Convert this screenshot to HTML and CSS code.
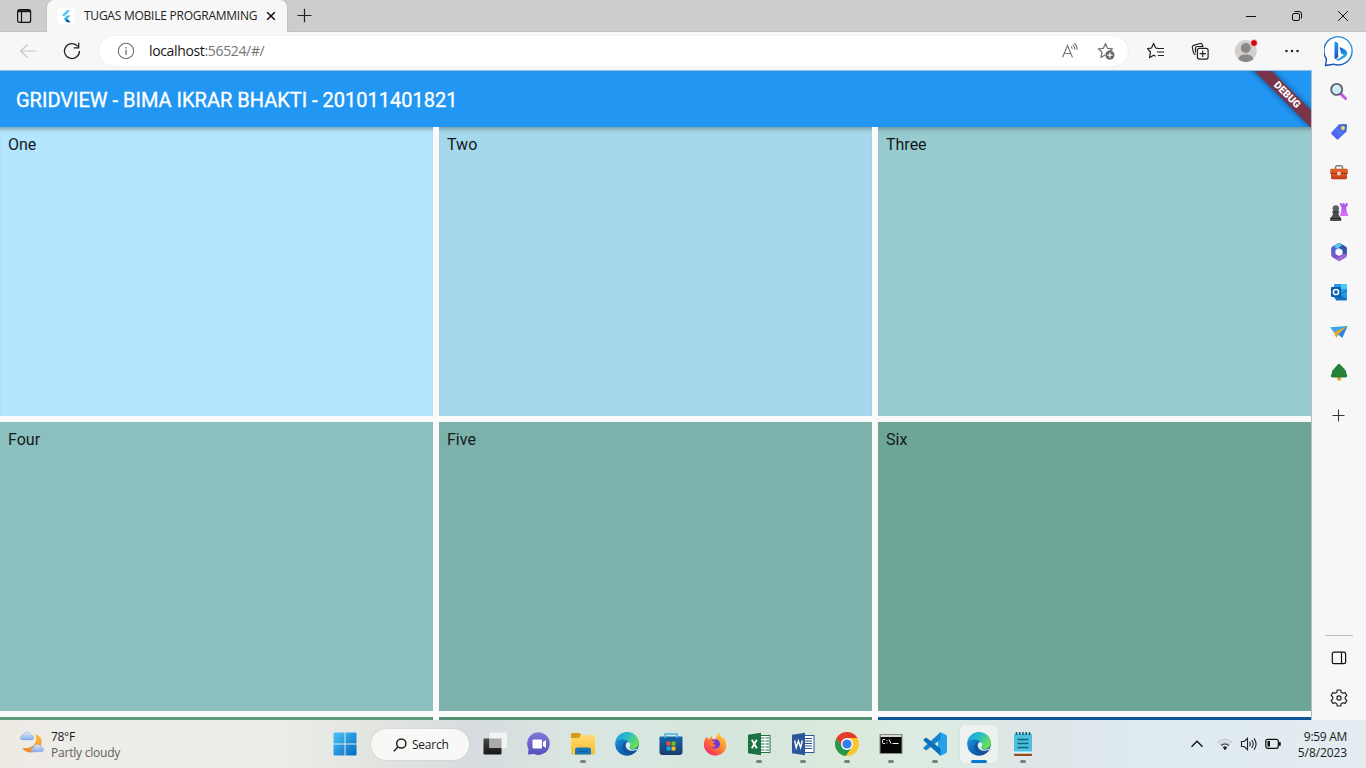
FILE: index.html
```html
<!DOCTYPE html>
<html lang="en">
<head>
<meta charset="utf-8">
<title>TUGAS MOBILE PROGRAMMING</title>
<link rel="stylesheet" href="styles.css">
</head>
<body>
<svg class="defs" width="0" height="0" aria-hidden="true">
  <defs>
    <linearGradient id="edgeTop" x1="0" y1="0" x2="1" y2=".5"><stop offset="0" stop-color="#1e9de6"/><stop offset=".5" stop-color="#24bcc9"/><stop offset="1" stop-color="#69e055"/></linearGradient>
    <linearGradient id="edgeLow" x1="0" y1="0" x2="1" y2="1"><stop offset="0" stop-color="#2aa5e4"/><stop offset=".5" stop-color="#0d68b8"/><stop offset="1" stop-color="#124a91"/></linearGradient>
    <linearGradient id="bing" x1="0" y1="0" x2="1" y2="1"><stop offset="0" stop-color="#1b4bbd"/><stop offset=".5" stop-color="#1b86e2"/><stop offset="1" stop-color="#2bd0e0"/></linearGradient>
    <linearGradient id="bingStem" x1="0" y1="0" x2="0" y2="1"><stop offset="0" stop-color="#27a0ea"/><stop offset="1" stop-color="#1a4fc4"/></linearGradient>
    <linearGradient id="bingRing" x1="0" y1="1" x2="1" y2="0"><stop offset="0" stop-color="#1944ae"/><stop offset="1" stop-color="#2aa4e8"/></linearGradient>
    <linearGradient id="tag" x1="1" y1="0" x2="0" y2="1"><stop offset="0" stop-color="#4267ca"/><stop offset=".5" stop-color="#4d73f1"/><stop offset="1" stop-color="#4a50f0"/></linearGradient>
    <linearGradient id="win" x1="0" y1="0" x2="1" y2="1"><stop offset="0" stop-color="#4cc5f7"/><stop offset="1" stop-color="#0069c5"/></linearGradient>
    <linearGradient id="folder" x1="0" y1="0" x2="0" y2="1"><stop offset="0" stop-color="#ffdc73"/><stop offset="1" stop-color="#f8bd2d"/></linearGradient>
    <linearGradient id="fox" x1="1" y1="0" x2=".2" y2="1"><stop offset="0" stop-color="#ffe14a"/><stop offset=".5" stop-color="#ff8a2b"/><stop offset="1" stop-color="#f52166"/></linearGradient>
    <linearGradient id="chat" x1="0" y1="0" x2="0" y2="1"><stop offset="0" stop-color="#8078d8"/><stop offset="1" stop-color="#5451bd"/></linearGradient>
    <linearGradient id="store" x1="0" y1="0" x2="0" y2="1"><stop offset="0" stop-color="#1466a9"/><stop offset="1" stop-color="#163d6b"/></linearGradient>
    <linearGradient id="moon" x1="0" y1="0" x2="0" y2="1"><stop offset="0" stop-color="#f9c33b"/><stop offset="1" stop-color="#ee8528"/></linearGradient>
    <linearGradient id="cloud" x1="0" y1="0" x2="0" y2="1"><stop offset="0" stop-color="#dfeafb"/><stop offset="1" stop-color="#86acea"/></linearGradient>
    <linearGradient id="dark" x1="0" y1="0" x2="0" y2="1"><stop offset="0" stop-color="#474747"/><stop offset="1" stop-color="#151515"/></linearGradient>
    <linearGradient id="rook" x1="0" y1="0" x2="0" y2="1"><stop offset="0" stop-color="#a24bed"/><stop offset="1" stop-color="#dd74f5"/></linearGradient>
    <linearGradient id="case" x1="0" y1="0" x2="0" y2="1"><stop offset="0" stop-color="#e1602a"/><stop offset="1" stop-color="#bd3a14"/></linearGradient>
    <symbol id="edge" viewBox="0 0 24 24">
      <circle cx="12" cy="12" r="11.800" fill="url(#edgeLow)"/>
      <path d="M.4 10C1.500 4 6 .2 12 .2c6.700 0 11.800 4.800 11.800 10.500 0 3.800-2.800 6.300-6.300 6.300-3 0-4.500-1.200-4-2.400 1.700-2.400.6-5.900-3.300-6.700C6 7 2.300 7.700.4 10z" fill="url(#edgeTop)"/>
      <path d="M11 9.800c-2.900 1.400-4 5.200-2.400 8.400 1.300 2.700 4.400 4.600 7.600 4.300 2.900-1 5-2.800 6.200-4.900-5 2.500-11.600.2-11.800-4.600 0-1.300.3-2.400.4-3.200z" fill="#11529c"/>
      <path d="M11.800 10.500c1.800-.9 3.800.2 3.600 2.200-.1 1.200-1.500 2-1.200 3.100.5 1.700 3.500 2.200 6 1.400l2.500-1c-.3.700-.6 1.200-1 1.700-4.700 2-10.800.3-11-4.500 0-1.200.3-2.300 1.100-2.900z" fill="#deefea"/>
    </symbol>
    <symbol id="cloudShape" viewBox="0 0 14 9"><path d="M3 8.500C.8 8.500.2 6.900.4 5.800.7 4.600 1.900 4 3 4.200 3.300 2 5 .6 7 .6s3.600 1.400 3.800 3.200c1.600-.1 2.800 1 2.800 2.400s-1 2.300-2.400 2.300z" fill="url(#cloud)" stroke="#7fa3dc" stroke-width=".5"/></symbol>
  </defs>
</svg>

<div class="desktop">
  <header class="titlebar">
    <div class="workspaces"><svg width="16" height="16" viewBox="0 0 16 16" fill="none" stroke="#111" stroke-width="1.200"><rect x="1.600" y="1.700" width="13" height="12.700" rx="2"/><path d="M2 3.200h12.300" stroke-width="2"/><path d="M5.500 4v10"/></svg></div>
    <div class="tab">
      <span class="favicon"><svg width="16" height="16" viewBox="0 0 16 16"><path d="M8.900 2.200h3.600L6 8.700 4.200 6.900z" fill="#54c5f8"/><path d="M9 7.600h3.600L9.200 11l3.400 3.300H9L5.700 11z" fill="#40b6ee"/><path d="m7.400 12.700 1.800-1.700 3.400 3.300H9z" fill="#08589c"/></svg></span>
      <span class="tab-title">TUGAS MOBILE PROGRAMMING</span>
      <svg class="tab-close" width="10" height="10" viewBox="0 0 10 10" stroke="#111" stroke-width="1.500"><path d="m1.200 1.200 7.600 7.600M8.800 1.200 1.200 8.800"/></svg>
    </div>
    <svg class="new-tab" width="15" height="15" viewBox="0 0 15 15" stroke="#222" stroke-width="1.200"><path d="M7.500 .8v13.400M.5 7.500h14"/></svg>
    <div class="window-buttons">
      <svg width="12" height="12" viewBox="0 0 12 12" stroke="#111" fill="none"><path d="M1 6.500h10"/></svg>
      <svg width="12" height="12" viewBox="0 0 12 12" stroke="#111" fill="none"><rect x="1.500" y="3.500" width="7" height="7" rx="1.500"/><path d="M3.500 1.500h4.500q2.500 0 2.500 2.500v4.500"/></svg>
      <svg width="12" height="12" viewBox="0 0 12 12" stroke="#111" fill="none"><path d="m1 1 10 10M11 1 1 11"/></svg>
    </div>
  </header>

  <div class="window">
    <section class="browser">
      <div class="toolbar">
        <svg class="back" width="18" height="16" viewBox="0 0 18 16" fill="none" stroke="#c5c5c5" stroke-width="1.100"><path d="M17 8H1.500M8.500 1.500 1.500 8l7 6.500"/></svg>
        <svg class="reload" width="18" height="18" viewBox="0 0 18 18" fill="none" stroke="#222" stroke-width="1.300"><path d="M16.500 9A7.500 7.500 0 1 1 14.800 4.300M15.700.8v5h-5"/></svg>
        <div class="address">
          <svg width="18" height="18" viewBox="0 0 18 18" fill="none" stroke="#707070" stroke-width="1.100"><circle cx="9" cy="9" r="7.700"/><path d="M9 7.700v5.200M9 4.900v1.500" stroke-width="1.300"/></svg>
          <span class="url"><b>localhost</b>:56524/#/</span>
          <svg class="read" width="18" height="18" viewBox="0 0 18 18" fill="none" stroke="#767676" stroke-width="1.100"><path d="m1.500 15.500 5-12 5 12M3.300 11.500h6.400M10 4.300q1.200 1.100 1.200 2.800M11.800 2.600q2.200 2 2 5M13.300 1.200q3.200 2.500 2.700 6.500"/></svg>
          <svg class="fav" width="18" height="18" viewBox="0 0 18 18"><path d="m8.500 1.500 2 4.800 5 .5-3.800 3.400M8.500 1.500l-2.100 4.800-5.100.5 3.800 3.500-1.200 5.200 4.300-2.500" fill="none" stroke="#737373" stroke-width="1.200" stroke-linejoin="round"/><circle cx="12.900" cy="13.100" r="4.600" fill="#686868"/><path d="M12.900 10.500v5.200M10.300 13.100h5.200" stroke="#fff" stroke-width="1.200"/></svg>
        </div>
        <div class="tools">
          <svg width="18" height="18" viewBox="0 0 18 18" fill="none" stroke="#222" stroke-width="1.200" stroke-linejoin="round"><path d="m11 6.300-2.300-.3L6.600 1.400 4.500 6l-4 .6L3.500 10l-1 5.700 4.100-2.500 2 1.100M11 6.500h6M10 10h7M11 13.500h6"/></svg>
          <svg width="18" height="18" viewBox="0 0 18 18" fill="none" stroke="#222" stroke-width="1.200"><rect x="6.400" y="6.400" width="10.700" height="10.700" rx="2"/><path d="M11.700 8.600v6.300M8.600 11.700h6.300M4.800 12.500Q3 12.500 2.500 10.700L1.300 5.700Q1 4 2.600 3.400L9 1.500q1.700-.3 2.300 1.400l.5 1.400M4.500 10.500V6.300q0-1.800 1.800-1.800h6.200"/></svg>
          <svg class="avatar" width="24" height="24" viewBox="0 0 24 24"><circle cx="11.800" cy="12" r="11" fill="#d2d0ce"/><circle cx="11.800" cy="9" r="5" fill="#8b8885"/><path d="M4.300 20.300C5 16.700 8 15.500 11.800 15.500s6.800 1.200 7.500 4.800a11 11 0 0 1-15 0z" fill="#8b8885"/><circle cx="20" cy="4" r="3.400" fill="#d4000d" stroke="#f7f7f7" stroke-width=".7"/></svg>
          <svg width="16" height="16" viewBox="0 0 16 16" fill="#222"><circle cx="2.500" cy="8" r="1.250"/><circle cx="8" cy="8" r="1.250"/><circle cx="13.500" cy="8" r="1.250"/></svg>
        </div>
      </div>
      <main class="app">
        <div class="appbar"><h1>GRIDVIEW - BIMA IKRAR BHAKTI - 201011401821</h1><span class="ribbon">DEBUG</span></div>
        <div class="grid">
          <div class="cell one">One</div><div class="cell two">Two</div><div class="cell three">Three</div>
          <div class="cell four">Four</div><div class="cell five">Five</div><div class="cell six">Six</div>
          <div class="cell seven"></div><div class="cell eight"></div><div class="cell nine"></div>
        </div>
      </main>
    </section>
    <aside class="sidebar">
      <svg class="bing" width="32" height="32" viewBox="0 0 32 32"><path d="M1.500 30.500 2.500 24A14.100 14.100 0 1 1 9.500 29.200z" fill="#fff" stroke="url(#bingRing)" stroke-width="1.400" stroke-linejoin="round"/><path d="M10.500 6.500q2 .2 3.700 1.800v14l-2.700 2q-1-.5-1-2z" fill="url(#bingStem)"/><path d="M15.500 12.800q.4-1 1.500-.4l3.500 1.800q3 1.700 2.700 4.500-.3 2.200-2.200 3.500l-5.500 3q-2 1-3.500-.5 5-1.700 5.900-3.700l2.100-1-2.800-1.500z" fill="url(#bing)"/></svg>
      <svg width="20" height="20" viewBox="0 0 20 20"><path d="m11 11 5.500 5.500" stroke="#c756e5" stroke-width="3" stroke-linecap="round"/><circle cx="7.700" cy="7.400" r="5.500" fill="#cdeaf8" stroke="#5c6265" stroke-width="1.800"/><path d="M4.500 7q.6-2.500 3-3" stroke="#fff" fill="none"/></svg>
      <svg width="20" height="20" viewBox="0 0 20 20"><path d="M10 2.300 17 2q1 0 1 1l-.4 6.500L9.500 17q-1 1-2 0L2.600 12.300q-1-1 0-2z" fill="url(#tag)"/><circle cx="14" cy="6" r="1.900" fill="#ffd45c"/></svg>
      <svg width="20" height="20" viewBox="0 0 20 20"><path d="M6.500 7V5.500q0-1.800 1.800-1.800h3.400q1.800 0 1.800 1.800V7" fill="none" stroke="#7a7c7d" stroke-width="1.400"/><rect x="1.200" y="6.800" width="17.600" height="5" rx="1" fill="#df5b26"/><path d="M2 11h16v5q0 1.300-1.300 1.300H3.300Q2 17.300 2 16z" fill="url(#case)"/><path d="M1.500 11.500h17" stroke="#9c3011"/><circle cx="10" cy="11.500" r="1.900" fill="#dad5d1"/></svg>
      <svg width="20" height="20" viewBox="0 0 20 20"><path d="M10.800 1h1.700v1.500h1.300V1h1.700v1.500h1.300V1h1.700v3l-1.300 1 .7 6 1.200 1.300V14h-8v-1.700l1-1.300.4-6-1-1z" fill="url(#rook)"/><path d="m4.500 8.500-1 5-2.300 2.700V19h11v-2.800L10 13.500l-1-5z" fill="#4b4c4e"/><circle cx="6.800" cy="6.500" r="3.200" fill="#5d5f61"/><path d="M3 10h7.500M1.500 16.500h10.300" stroke="#292a2c"/></svg>
      <svg width="20" height="20" viewBox="0 0 20 20"><path d="M9 1.500q1.200-.6 2.300 0l5.200 3q1.300.8 1.300 2.200v6.500q0 1.400-1.300 2.200l-5.200 3q-1.200.6-2.300 0l-5.500-3.200Q2.200 14.500 2.200 13V6.700q0-1.400 1.300-2.200z" fill="#7558c7"/><path d="m3.500 4.500 5.500-3q1.200-.5 2.300 0l3 1.800L7 7.300V12L2.500 9.500V6.200z" fill="#5368d3"/><path d="m8 2 3-.8 5.500 3.300q1.300.8 1.300 2.200v6.500L13.400 12V8L8 5z" fill="#2e5ca9"/><path d="m5 4 4-2.500q1-.5 2.300 0l2 1.200L8 7z" fill="#5cc8ec"/><path d="m17.800 11.500v2q-.3 1.200-1.300 1.900l-5.200 3q-1.200.6-2.300 0l-2-1.300 7.500-4.500z" fill="#a766d2"/><path d="m10 6.200 3.500 2v4L10 14.100l-3.500-2v-4z" fill="#f7f7f7"/></svg>
      <svg width="20" height="20" viewBox="0 0 20 20"><rect x="5" y="2" width="13" height="14.500" rx="1" fill="#239be7"/><path d="M12 2h5q1 0 1 1v4h-6z" fill="#45c7fa"/><path d="M5 12h6l7-4v9.500q0 1-1 1H7z" fill="#126fc3"/><path d="m11 13 7-4v8z" fill="#279be0"/><rect x="2" y="5" width="10" height="10" rx="1" fill="#075fac"/><circle cx="7" cy="10" r="2.600" fill="none" stroke="#fff" stroke-width="1.500"/></svg>
      <svg width="20" height="20" viewBox="0 0 20 20"><path d="M1 5.200 18.500 4 13.300 15.700l-4-3-2 3L5.500 11z" fill="#39a7ed"/><path d="M18.500 4 4.800 10.300l2.500 5.400L9.500 12z" fill="#eda528"/><path d="m18.500 4-9.200 8.400 4 3.300z" fill="#2f86dc"/></svg>
      <svg width="20" height="20" viewBox="0 0 20 20"><rect x="8.300" y="14" width="3.800" height="4.600" rx=".6" fill="#e6a230"/><path d="M9 2.200q1-1 2 0l3 3.300 3 3.500q.5.900 0 1.500l1.300 3q.3 2-2 2H3.800q-2.300 0-2-2l1.300-3q-.5-.6 0-1.500l3-3.500z" fill="#268038"/></svg>
      <svg class="add" width="16" height="16" viewBox="0 0 16 16" stroke="#333"><path d="M7.500 1.500v12M1.500 7.500h12"/></svg>
      <div class="sidebar-end">
        <svg width="16" height="14" viewBox="0 0 16 14" fill="none" stroke="#111" stroke-width="1.200"><rect x="1.300" y="1.200" width="13.300" height="11.500" rx="1.700"/><path d="M10.500 1.500v11"/></svg>
        <svg width="18" height="18" viewBox="0 0 18 18" fill="none" stroke="#222" stroke-width="1.200" stroke-linejoin="round"><path d="M7.300 1h3.400l.5 2.300 1.700 1 2.200-.7L16.800 6.500 15.200 8.100v1.800l1.600 1.600-1.700 2.900-2.200-.7-1.700 1-.5 2.300H7.300l-.5-2.300-1.700-1-2.200.7-1.700-2.900 1.600-1.600V8.100L1.200 6.500l1.700-2.900 2.200.7 1.700-1z"/><circle cx="9" cy="9" r="2.100"/></svg>
      </div>
    </aside>
  </div>

  <footer class="taskbar">
    <div class="weather">
      <svg width="28" height="26" viewBox="0 0 28 26"><path d="M15.500 5c4.500 1.300 6.700 5.200 6 9.300-.9 5.600-5.300 9.200-10.300 9.200-4 0-7.500-2-9-4.800 6.500 1.500 14-1.900 14-8.700 0-1.700-.2-3.300-.7-5z" fill="url(#moon)"/><use href="#cloudShape" x="0" y="2.500" width="14" height="9"/><use href="#cloudShape" x="10.500" y="14.500" width="13.500" height="9"/></svg>
      <div><p class="temp">78°F</p><p class="sky">Partly cloudy</p></div>
    </div>
    <nav class="apps">
      <div class="slot start"><svg width="24" height="24" viewBox="0 0 24 24" fill="url(#win)"><path d="M.5 1.500q0-1 1-1h10v11H.5zM12.500.5h10q1 0 1 1v10h-11zM.5 12.500h11v11h-10q-1 0-1-1zM12.500 12.500h11v10q0 1-1 1h-10z"/></svg></div>
      <div class="search"><svg width="14" height="14" viewBox="0 0 14 14" fill="none" stroke="#222" stroke-width="1.500"><circle cx="8.300" cy="5.500" r="4.600"/><path d="M4.900 9 .8 13.200"/></svg><span>Search</span></div>
      <div class="slot"><svg width="24" height="24" viewBox="0 0 24 24"><rect x=".5" y="6.500" width="18" height="16" rx="1" fill="url(#dark)"/><rect x="6.500" y=".5" width="17.500" height="15.500" rx="1" fill="#f3f4f4"/><path d="M6.500 6.500h12V16h-12z" fill="#ababab"/></svg></div>
      <div class="slot"><svg width="24" height="24" viewBox="0 0 24 24"><path d="M1 22.500 1.500 17A11.300 11.300 0 1 1 7 22z" fill="url(#chat)"/><rect x="5.500" y="7.500" width="9.500" height="9" rx="1" fill="#fff"/><path d="m16 10 3-2v8l-3-2z" fill="#fff"/></svg></div>
      <div class="slot running"><svg width="24" height="24" viewBox="0 0 24 24"><path d="M0 2.500Q0 1 1.500 1H8q1.500 0 2 1.500V6H0z" fill="#d69c10"/><path d="M0 6h8l2-3h12.500Q24 3 24 4.500V21q0 1.500-1.500 1.500h-21Q0 22.500 0 21z" fill="url(#folder)"/><path d="M4 22.500V18q0-2.500 2.500-2.500h11q2.500 0 2.500 2.500v4.500z" fill="#1675bd"/><path d="M7.500 19.500h9" stroke="#125b9e" stroke-width="1.200"/></svg></div>
      <div class="slot"><svg width="24" height="24"><use href="#edge"/></svg></div>
      <div class="slot"><svg width="24" height="24" viewBox="0 0 24 24"><path d="M.5 5.500q0-1 1-1h21q1 0 1 1V20q0 3-3 3h-17q-3 0-3-3z" fill="url(#store)"/><path d="M7.500 9.500h4v4h-4z" fill="#f05425"/><path d="M12.500 9.500h4v4h-4z" fill="#7dbc24"/><path d="M7.500 14.500h4v4h-4z" fill="#19a8e9"/><path d="M12.500 14.500h4v4h-4z" fill="#fbbc16"/><path d="M6 6V2h12v4" stroke="#37b9e8" stroke-width="1.500" fill="none"/></svg></div>
      <div class="slot"><svg width="24" height="24" viewBox="0 0 24 24"><path d="M3.500 4.800 5 7l2-.7L8.500 4l.7 2.500 3 .5C14 5 14 2 16.500.5c0 2.500 1 4 3 5.500l1-.5c3 4 3.800 9 1.300 13-4.500 7-14.700 6.700-19 0C-.5 14 1 8 3.500 4.800z" fill="url(#fox)"/><path d="M8 8.500c2-1.500 4-.5 5-1.500 3 1 4.500 3.500 4 6-.7 4-5.500 4.500-8.500 2 2 .5 3.500-.6 4-1.500-2-.5-4.500-1-5-3z" fill="#743bdc"/><path d="M6.500 9.500q3-1.500 5.500.5l-2 1.300q1 2 3 1.700-2 2.500-5 1-2-2-1.500-4.500z" fill="#fa7a2c"/></svg></div>
      <div class="slot running"><svg width="24" height="24" viewBox="0 0 24 24"><rect x="12" y="3.500" width="11" height="17" fill="#fff" stroke="#217346"/><path d="M14 6h3.500M14 9h3.500M14 12h3.500M14 15h3.500M14 18h3.500M18.500 6H22M18.500 9H22M18.500 12H22M18.500 15H22M18.500 18H22" stroke="#217346" stroke-width="1.200"/><path d="M1 2.800 14 .8v22.400L1 21.200z" fill="#1e7145"/><path d="m4.800 7.700 5 8.600M9.800 7.700l-5 8.600" stroke="#fff" stroke-width="1.800"/></svg></div>
      <div class="slot running"><svg width="24" height="24" viewBox="0 0 24 24"><rect x="12" y="3.500" width="11" height="17" fill="#fff" stroke="#2b579a"/><path d="M14 6.500h7M14 9h7M14 11.500h7M14 14h7M14 16.500h7" stroke="#2b579a"/><path d="M1 2.800 14 .8v22.400L1 21.200z" fill="#2b579a"/><path d="m3.700 8.500 1.500 7L7.400 9l2.200 6.500 1.700-7" stroke="#fff" fill="none" stroke-width="1.400"/></svg></div>
      <div class="slot running"><svg width="24" height="24" viewBox="0 0 24 24"><circle cx="12" cy="12" r="12" fill="#fbc62e"/><path d="M1.600 6A12 12 0 0 1 22.400 6H12L6.500 15z" fill="#e33b2e"/><path d="M1.600 6A12 12 0 0 0 10.500 23.900L17.200 15 12 18 6.800 15z" fill="#249b4c"/><circle cx="12" cy="12" r="6" fill="#fff"/><circle cx="12" cy="12" r="4.600" fill="#347ded"/></svg></div>
      <div class="slot running"><svg width="24" height="24" viewBox="0 0 24 24"><rect x="1" y="2.500" width="22" height="19" fill="#050505" stroke="#888"/><path d="M1.500 4h21" stroke="#d7d7d7" stroke-width="2"/><path d="M6 7.500H4.500q-1 0-1 1v2q0 1 1 1H6M8 8v.9M8 10.500v.9M10 7.500l2 4M13.500 11.500h6" stroke="#fff" fill="none"/></svg></div>
      <div class="slot running"><svg width="24" height="24" viewBox="0 0 24 24"><path d="m17.500.3 5 2.300Q24 3.300 24 5v14q0 1.700-1.500 2.400l-5 2.300L15 21V3z" fill="#27a1ec"/><path d="M17.500.3.8 15.200q-.8.8 0 1.500l1.500 1.300q.7.600 1.500 0L17.500 7.500z" fill="#1684cc"/><path d="M17.500 23.700.8 8.800q-.8-.8 0-1.500L2.300 6q.7-.6 1.500 0l13.700 10.500z" fill="#0870b7"/></svg></div>
      <div class="slot active"><svg width="24" height="24"><use href="#edge"/></svg></div>
      <div class="slot running"><svg width="24" height="24" viewBox="0 0 24 24"><path d="M3 21.500h18V23q0 1-1 1H4q-1 0-1-1z" fill="#99491f"/><path d="M3 3q0-1.500 1.500-1.500h15Q21 1.500 21 3v17.500H3z" fill="#4cc1df"/><path d="M3 19.500h18v2H3z" fill="#d8f3fa"/><path d="M5.500 0v3M8.800 0v3M12 0v3M15.200 0v3M18.500 0v3" stroke="#155e75" stroke-width="1.500"/><path d="M6.500 7.500h11M6.500 11.500h11M6.500 15.500h11" stroke="#12617d" stroke-width="1.500"/></svg></div>
    </nav>
    <div class="tray">
      <svg width="14" height="10" viewBox="0 0 14 10" fill="none" stroke="#111" stroke-width="1.400"><path d="M1.500 7.700 7 2.200l5.500 5.500"/></svg>
      <div class="status">
        <svg width="16" height="16" viewBox="0 0 16 16" fill="none" stroke-width="1.200"><path d="M1 6.500q7-6 14 0M3.200 8.700q4.800-4 9.600 0" stroke="#b6bec2"/><path d="M4.300 9.500q3.700-3 7.400 0M6 11.600q2-1.700 4 0" stroke="#222"/><circle cx="8" cy="12.500" r="1.300" fill="#111"/></svg>
        <svg width="18" height="16" viewBox="0 0 18 16" fill="none" stroke="#222" stroke-width="1.100"><path d="M1.500 5.500h2.700L7.500 2.300v11.400l-3.300-3.200H1.500zM9.500 5.700q1.500 2.300 0 4.600M11.700 4q3 4 0 8M14 2.300q4.200 5.700 0 11.400"/></svg>
        <svg width="16" height="16" viewBox="0 0 16 16"><rect x=".8" y="3.300" width="12.500" height="9" rx="2" fill="none" stroke="#111" stroke-width="1.200"/><path d="M2.500 5H5v5.600H2.500zM14 6h1.700v3.700H14z" fill="#111"/></svg>
      </div>
      <div class="clock"><p class="time">9:59 AM</p><p class="date">5/8/2023</p></div>
    </div>
  </footer>
</div>
</body>
</html>
```
FILE: styles.css
```css
* { box-sizing: border-box; }
body { margin: 0; overflow: hidden; font-family: "Open Sans", "Noto Sans", sans-serif; font-size: 12px; color: #1b1b1b; }
p, h1 { margin: 0; }
svg { display: block; flex: none; }
.defs { position: absolute; }
.desktop { display: flex; flex-direction: column; width: 1366px; height: 768px; background: #f7f7f7; }
.titlebar { display: flex; height: 32px; background: #cdcdcd; border-bottom: 1px solid #c2c2c2; }
.workspaces { width: 47px; padding: 8px 0 0 16px; }
.tab { display: flex; align-items: center; width: 240px; height: 32px; padding: 0 11px; background: #f7f7f7; border-radius: 7px 7px 0 0; box-shadow: 0 0 2px #aaa; clip-path: inset(0 -3px 0 -3px); }
.favicon { display: grid; width: 16px; height: 16px; background: #fff; }
.tab-title { width: 182px; margin-left: 10px; padding-bottom: 1px; white-space: nowrap; letter-spacing: -.24px; color: #222; }
.new-tab { margin: 8px 0 0 10px; }
.window-buttons { display: flex; gap: 34px; margin-left: auto; padding: 10px 17px 0 0; }
.window { display: flex; height: 688px; }
.browser { width: 1312px; }
.toolbar { display: flex; align-items: center; height: 38px; padding-left: 19px; }
.reload { margin-left: 26px; }
.address { display: flex; align-items: center; width: 1029px; height: 30px; margin-left: 18px; padding-left: 18px; background: #fff; border-radius: 15px; box-shadow: 0 0 2px #e3e3e3; }
.url { width: 907px; margin-left: 14px; padding-bottom: 1px; font-size: 14px; letter-spacing: -.35px; color: #747474; }
.url b { font-weight: 400; color: #181818; }
.read { margin-left: 5px; }
.fav { margin-left: 18px; }
.tools { display: flex; align-items: center; margin-left: 19px; }
.tools svg + svg { margin-left: 26px; }
.tools svg + .avatar { margin-left: 25px; }
.app { height: 650px; overflow: hidden; background: #fafafa; border-top: 1px solid #94bddb; border-right: 1px solid #b5bdbf; font-family: Roboto, sans-serif; }
.appbar { position: relative; z-index: 1; display: flex; align-items: center; height: 56px; padding: 2px 16px 0; overflow: hidden; color: #fff; background: #2196f3; }
.appbar h1 { font-size: 20px; font-weight: 400; white-space: nowrap; -webkit-text-stroke: .35px #fff; }
.ribbon { position: absolute; top: 18px; right: -26px; width: 100px; height: 12px; color: #fff; background: #7a3349; box-shadow: 0 0 6px rgba(0,0,0,.5); font-size: 10.200px; font-weight: 900; line-height: 12px; text-align: center; transform: rotate(45deg); }
.grid { display: grid; grid-template-columns: repeat(3, 433px); grid-auto-rows: 289px; gap: 6px; }
.cell { padding: 8px; font-size: 16px; line-height: 19px; color: #15191b; }
.one, .two, .three { box-shadow: inset 0 5px 4px -3px rgba(0,0,0,.3); }
.one { background: #b3e5fc; } .two { background: #a5d8ea; } .three { background: #98cbd0; }
.four { background: #8bc0bf; } .five { background: #7db2ac; } .six { background: #6da696; }
.seven { background: #5f9b7e; } .eight { background: #549074; } .nine { background: #0b5599; }
.sidebar { display: flex; flex-direction: column; align-items: center; width: 54px; padding-top: 3px; background: #f7f7f7; }
.bing { margin: 0 0 15px 2px; }
.sidebar > svg:not(.bing):not(.add) { margin-bottom: 20px; }
.add { margin-top: 6px; }
.sidebar-end { display: flex; flex-direction: column; align-items: center; gap: 24px; width: 28px; height: 85px; margin-top: auto; padding-top: 15px; border-top: 1px solid #b9b9b9; }
.taskbar { display: grid; grid-template-columns: 322px 724px 320px; height: 48px; background: linear-gradient(90deg, #eeebe5 0%, #eceeea 20%, #e3e5e1 27%, #d6dcdf 35%, #d9e6e0 42%, #d5e6dc 54%, #dceadc 62%, #dcebe3 69%, #dfe5e8 76%, #deebf0 84%, #e4ecf0 100%); }
.weather { display: flex; gap: 3px; padding: 9px 0 0 20px; line-height: 16px; }
.weather .temp { letter-spacing: -.3px; }
.weather .sky { letter-spacing: -.22px; color: #60615f; }
.apps { display: flex; }
.slot { display: flex; flex: none; flex-direction: column; align-items: center; width: 44px; padding-top: 12px; }
.start { width: 45px; }
.running::after { content: ""; width: 6px; height: 3px; margin-top: 4px; border-radius: 2px; background: #7b807d; }
.active { width: 38px; height: 38px; margin: 5px 3px 0; padding-top: 7px; background: #edf2ef; border-radius: 4px; box-shadow: 0 0 1px #aaa; }
.active::after { content: ""; width: 16px; height: 3px; margin-top: 4px; border-radius: 2px; background: #0879cf; }
.search { display: flex; align-items: center; gap: 5px; flex: none; width: 98px; height: 31px; margin: 9px 4px 0 4px; padding-left: 22px; background: #f8f8f6; border-radius: 16px; box-shadow: 0 0 2px #c5c5c5; letter-spacing: -.25px; }
.tray { display: flex; align-items: center; padding-left: 144px; }
.status { display: flex; gap: 7px; margin-left: 13px; }
.clock { flex: 1; padding: 1px 19px 0 0; text-align: right; line-height: 16px; }
.time { letter-spacing: -.3px; }
.date { letter-spacing: -.1px; }
```
